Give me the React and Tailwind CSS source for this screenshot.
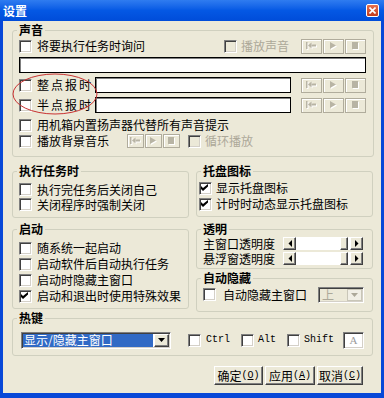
// App.jsx - 设置 dialog (XP style)
const sunken =
  "border border-t-[#808080] border-l-[#808080] border-b-white border-r-white shadow-[inset_1px_1px_0_#404040,inset_-1px_-1px_0_#d4d0c8]";
const raised =
  "border border-t-white border-l-white border-b-[#404040] border-r-[#404040] shadow-[inset_-1px_-1px_0_#808080]";

function Check({ checked, disabled, className = "" }) {
  return (
    <span
      className={`relative block w-[13px] h-[13px] shrink-0 ${sunken} ${
        disabled ? "bg-[#ece9d8]" : "bg-white"
      } ${className}`}
    >
      {checked && (
        <svg className="absolute left-[1px] top-[1px]" width="7" height="7" viewBox="0 0 7 7">
          <path d="M0 2L2 4L7 0V2.5L2 7L0 5Z" fill="#000" />
        </svg>
      )}
    </span>
  );
}

function CheckRow({ children, checked, h = "h-[16px]", gap = "ml-[5px]" }) {
  return (
    <div className={`flex items-center ${h}`}>
      <Check checked={checked} />
      <span className={gap}>{children}</span>
    </div>
  );
}

function Input({ className = "" }) {
  return (
    <div
      className={`h-[16px] bg-white border border-black shadow-[inset_1px_1px_0_#7f7f7f] ${className}`}
    />
  );
}

function Icon({ kind }) {
  const shape = (fill, dx) => {
    if (kind === "prev")
      return (
        <g fill={fill} transform={`translate(${dx},${dx})`}>
          <rect x="0" y="0" width="1.5" height="7" />
          <polygon points="2,3.5 5.5,0.5 5.5,6.5" />
          <rect x="5.5" y="2.5" width="4.5" height="2" />
        </g>
      );
    if (kind === "play")
      return <polygon fill={fill} transform={`translate(${dx},${dx})`} points="2,0 8,3.5 2,7" />;
    return <rect fill={fill} x={2 + dx} y={dx} width="6" height="7" />;
  };
  return (
    <svg width="11" height="8" viewBox="0 0 11 8">
      {shape("#ffffff", 1)}
      {shape("#b8b4a4", 0)}
    </svg>
  );
}

function Players({ small, className = "" }) {
  const size = small ? "w-[17px] h-[14px]" : "w-[21px] h-[15px]";
  return (
    <div className={`flex gap-[1px] ${className}`}>
      {["prev", "play", "stop"].map((k) => (
        <span
          key={k}
          className={`${size} flex items-center justify-center bg-[#ece9d8] border border-[#b0ac9c] shadow-[inset_1px_1px_0_#ffffff]`}
        >
          <Icon kind={k} />
        </span>
      ))}
    </div>
  );
}

function Group({ title, className = "", children }) {
  return (
    <fieldset className={`border border-[#d0d0bf] rounded-[3px] p-0 m-0 min-w-0 ${className}`}>
      <legend className="ml-[4px] px-[2px] font-bold leading-[12px]">{title}</legend>
      {children}
    </fieldset>
  );
}

function ArrowBtn({ dir }) {
  return (
    <span className={`w-[13px] h-[13px] shrink-0 flex items-center justify-center bg-[#ece9d8] ${raised}`}>
      <svg width="4" height="7" viewBox="0 0 4 7">
        <polygon
          fill="#000"
          points={dir === "left" ? "4,0 0.5,3.5 4,7" : "0,0 3.5,3.5 0,7"}
        />
      </svg>
    </span>
  );
}

function HScroll() {
  return (
    <div className="flex w-[80px] h-[13px]">
      <ArrowBtn dir="left" />
      <div className="flex-1 flex justify-end bg-white pr-[2px]">
        <span className={`w-[8px] h-full bg-[#ece9d8] ${raised}`} />
      </div>
      <ArrowBtn dir="right" />
    </div>
  );
}

function DownTri({ color = "#000" }) {
  return (
    <svg width="7" height="4" viewBox="0 0 7 4">
      <polygon fill={color} points="0,0 7,0 3.5,4" />
    </svg>
  );
}

function Button({ w, label, hot }) {
  return (
    <button
      className={`${w} h-[19px] flex items-center justify-center bg-[#ece9d8] ${raised}`}
    >
      <span>{label}</span>
      <span className="font-['Liberation_Mono',monospace] text-[10px]">
        (<u>{hot}</u>)
      </span>
    </button>
  );
}

export default function App() {
  return (
    <div className="w-[384px] h-[398px] flex flex-col bg-[#0848d8] font-['Noto_Sans_CJK_SC',sans-serif] text-[12px] leading-[12px] text-black select-none">
      <div className="h-[21px] shrink-0 flex items-center justify-between pl-[3px] pr-[5px] bg-linear-to-b from-[#2f7cf0] via-[#0458e4] to-[#004cd9]">
        <span className="text-white font-bold">设置</span>
        <span className="w-[13px] h-[13px] rounded-[2px] border border-white bg-linear-to-b from-[#e8704e] to-[#c23a1c] flex items-center justify-center">
          <svg width="7" height="7" viewBox="0 0 7 7">
            <path d="M0.5 0.5L6.5 6.5M6.5 0.5L0.5 6.5" stroke="#fff" strokeWidth="1.6" />
          </svg>
        </span>
      </div>

      <div className="relative flex-1 mx-[3px] mb-[5px] bg-[#ece9d8] pl-[9px] pt-[3px]">
        <Group title="声音" className="w-[362px]">
          <div className="pl-[6px] pr-[7px] pt-[2px] pb-[7px]">
            <div className="flex items-center h-[16px]">
              <Check />
              <span className="ml-[5px]">将要执行任务时询问</span>
              <Check disabled className="ml-auto" />
              <span className="ml-[4px] text-[#aca899]">播放声音</span>
              <Players className="ml-[12px]" />
            </div>
            <Input className="mt-[3px] w-full" />
            <div className="flex items-center h-[16px] mt-[4px]">
              <Check />
              <span className="ml-[5px] w-[58px] tracking-[2px]">整点报时</span>
              <Input className="w-[196px]" />
              <Players className="ml-auto" />
            </div>
            <div className="flex items-center h-[16px] mt-[4px]">
              <Check />
              <span className="ml-[5px] w-[58px] tracking-[2px]">半点报时</span>
              <Input className="w-[196px]" />
              <Players className="ml-auto" />
            </div>
            <div className="mt-[4px]">
              <CheckRow>用机箱内置扬声器代替所有声音提示</CheckRow>
            </div>
            <div className="flex items-center h-[16px]">
              <Check />
              <span className="ml-[5px]">播放背景音乐</span>
              <Players small className="ml-[18px]" />
              <Check disabled className="ml-[8px]" />
              <span className="ml-[4px] text-[#aca899]">循环播放</span>
            </div>
          </div>
        </Group>

        <div className="flex items-start gap-[7px] mt-[8px]">
          <div className="flex flex-col w-[177px]">
            <Group title="执行任务时">
              <div className="pl-[6px] pt-[5px] pb-[5px]">
                <CheckRow h="h-[15px]">执行完任务后关闭自己</CheckRow>
                <CheckRow h="h-[15px]">关闭程序时强制关闭</CheckRow>
              </div>
            </Group>
            <Group title="启动" className="mt-[5px]">
              <div className="pl-[6px] pt-[5px] pb-[4px]">
                <CheckRow>随系统一起启动</CheckRow>
                <CheckRow>启动软件后自动执行任务</CheckRow>
                <CheckRow>启动时隐藏主窗口</CheckRow>
                <CheckRow checked>启动和退出时使用特殊效果</CheckRow>
              </div>
            </Group>
          </div>

          <div className="flex flex-col w-[177px]">
            <Group title="托盘图标">
              <div className="pl-[2px] pt-[3px] pb-[4px]">
                <CheckRow checked gap="ml-[4px]">显示托盘图标</CheckRow>
                <CheckRow checked gap="ml-[4px]">计时时动态显示托盘图标</CheckRow>
              </div>
            </Group>
            <Group title="透明" className="mt-[6px]">
              <div className="pl-[6px] pt-[1px] pb-[2px]">
                <div className="flex items-center h-[15px]">
                  <span className="w-[80px]">主窗口透明度</span>
                  <HScroll />
                </div>
                <div className="flex items-center h-[15px]">
                  <span className="w-[80px]">悬浮窗透明度</span>
                  <HScroll />
                </div>
              </div>
            </Group>
            <Group title="自动隐藏" className="mt-[3px]">
              <div className="flex items-center h-[17px] pl-[6px] mt-[2px] mb-[8px]">
                <Check />
                <span className="ml-[7px]">自动隐藏主窗口</span>
                <div className={`ml-[11px] w-[46px] h-[16px] flex items-center p-[1px] bg-[#ece9d8] ${sunken}`}>
                  <span className="flex-1 pl-[2px] text-[#aca899]">上</span>
                  <span className="w-[15px] h-full flex items-center justify-center border border-[#c9c6b8] bg-[#f1efe6]">
                    <DownTri color="#aca899" />
                  </span>
                </div>
              </div>
            </Group>
          </div>
        </div>

        <Group title="热键" className="w-[361px]">
          <div className="flex items-center h-[20px] pl-[8px] mt-[6px] mb-[5px]">
            <div className={`flex w-[150px] h-[17px] p-[1px] bg-white ${sunken}`}>
              <span className="flex-1 flex items-center pl-[1px] bg-[#316ac5] text-white">
                显示/隐藏主窗口
              </span>
              <span className={`w-[15px] ml-[1px] flex items-center justify-center bg-[#ece9d8] ${raised}`}>
                <DownTri />
              </span>
            </div>
            <Check className="ml-[17px]" />
            <span className="ml-[5px] font-['Liberation_Mono',monospace] text-[10px]">Ctrl</span>
            <Check className="ml-[11px]" />
            <span className="ml-[4px] font-['Liberation_Mono',monospace] text-[10px]">Alt</span>
            <Check className="ml-[11px]" />
            <span className="ml-[4px] font-['Liberation_Mono',monospace] text-[10px]">Shift</span>
            <span className={`ml-[9px] w-[21px] h-[17px] flex items-center justify-center bg-white text-[#9a9a9a] font-['Liberation_Serif',serif] text-[11px] ${sunken}`}>
              A
            </span>
          </div>
        </Group>

        <div className="flex justify-end gap-[2px] mt-[10px] pr-[18px]">
          <Button w="w-[49px]" label="确定" hot="O" />
          <Button w="w-[50px]" label="应用" hot="A" />
          <Button w="w-[46px]" label="取消" hot="C" />
        </div>

        <svg
          className="absolute left-[9px] top-[52px] pointer-events-none"
          width="86"
          height="42"
          viewBox="0 0 86 42"
        >
          <ellipse cx="43" cy="21" rx="42" ry="20" fill="none" stroke="#c83232" strokeWidth="1" />
        </svg>
      </div>
    </div>
  );
}
